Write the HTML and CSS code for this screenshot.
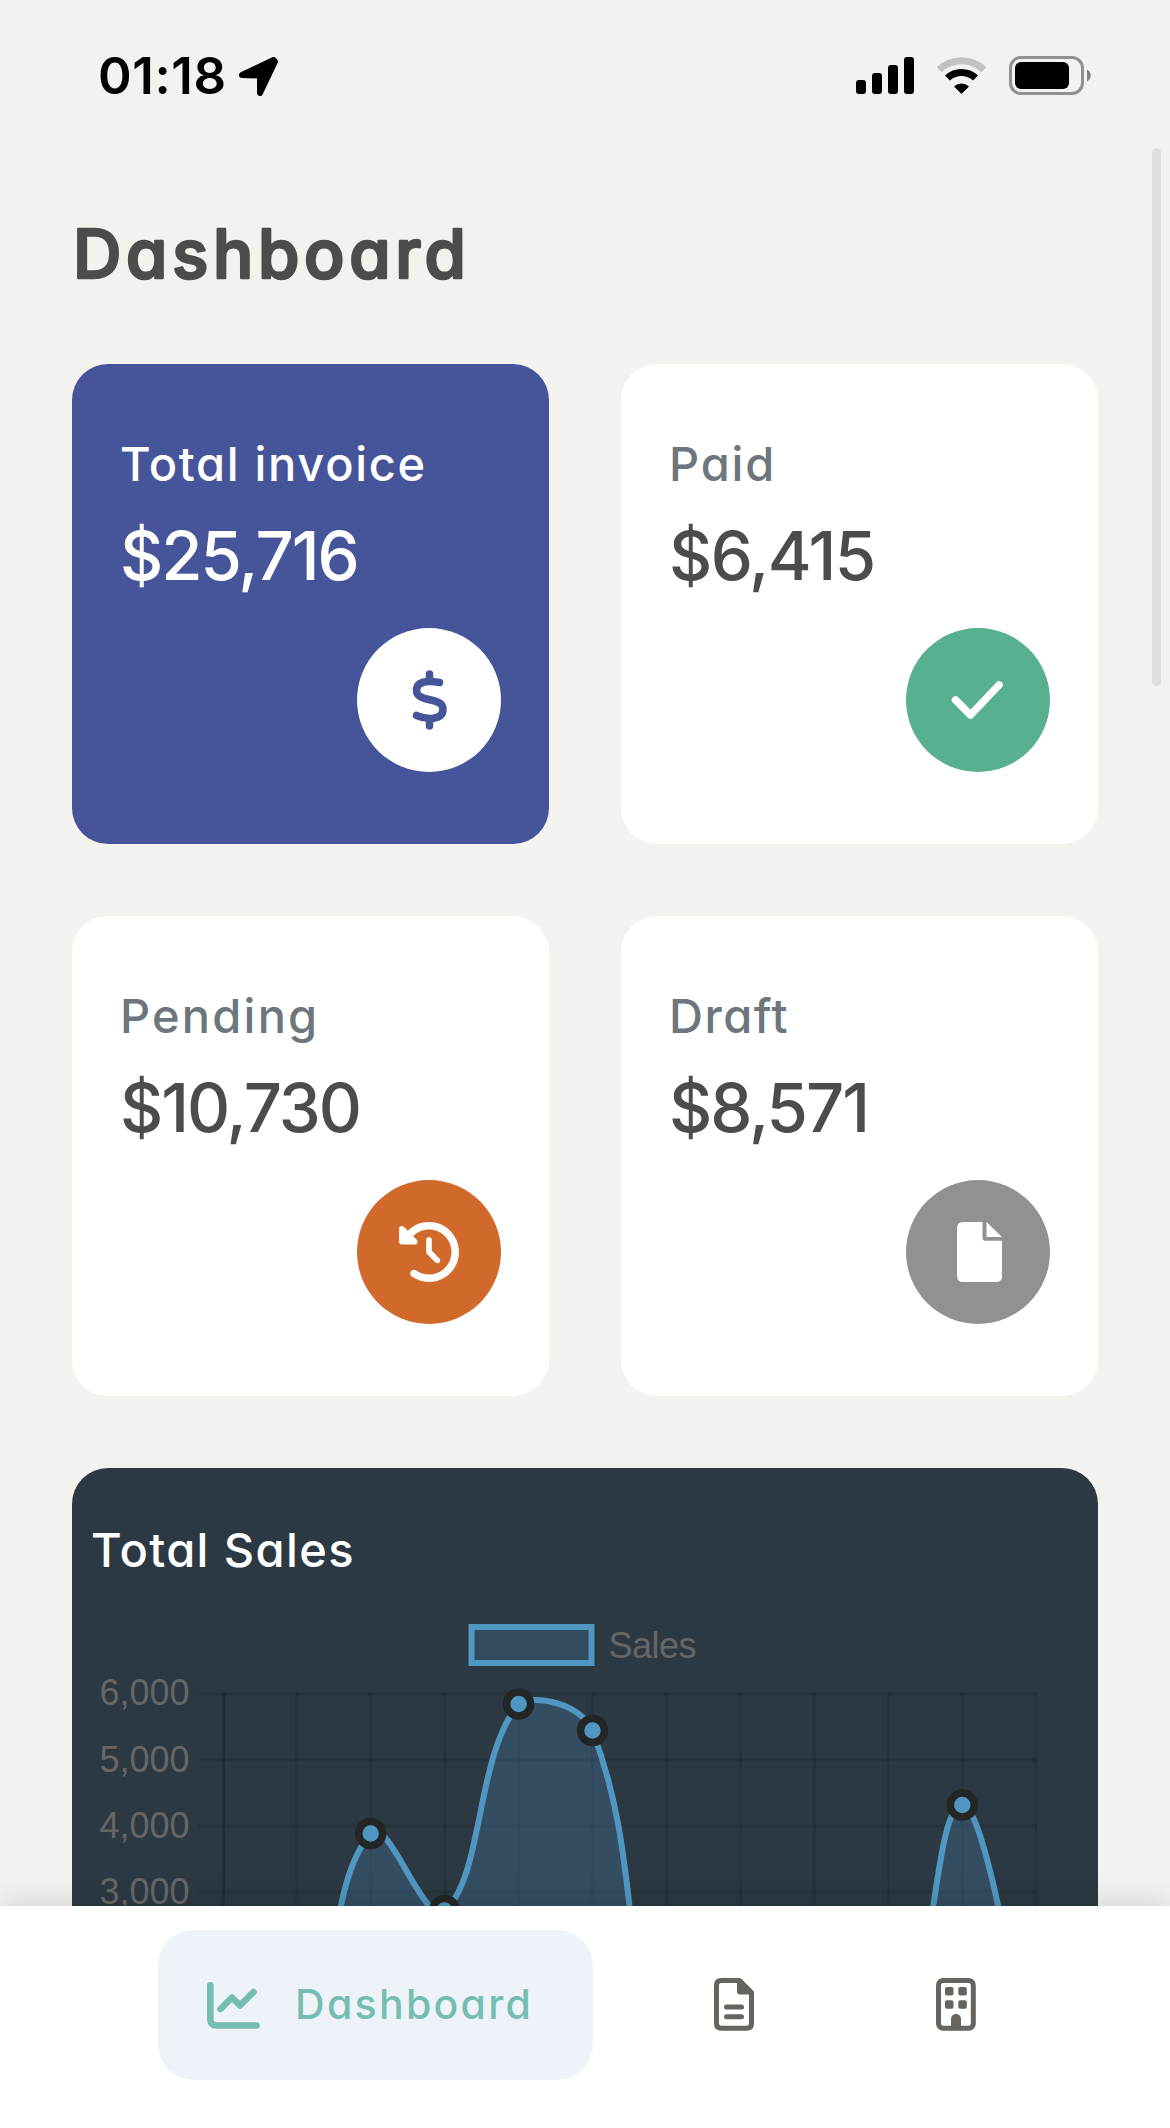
FILE: index.html
```html
<!DOCTYPE html>
<html lang="en">
<head>
<meta charset="utf-8">
<meta name="viewport" content="width=device-width, initial-scale=1">
<title>Dashboard</title>
<link rel="stylesheet" href="styles.css">
</head>
<body>
<div class="screen">
  <header class="status">
    <div class="status-left">
      <span class="clock">01:18</span>
      <svg class="location" viewBox="0 0 39 39"><path d="M3 18 34.500 3 36 4.500 21 36V18.500Z" fill="#000" stroke="#000" stroke-width="6" stroke-linejoin="round"/></svg>
    </div>
    <svg class="status-icons" viewBox="0 0 235 39">
      <rect x="0" y="24" width="10" height="14" rx="3"/>
      <rect x="16" y="17" width="10" height="21" rx="3"/>
      <rect x="32" y="9" width="10" height="29" rx="3"/>
      <rect x="48" y="1" width="10" height="37" rx="3"/>
      <g fill="none" stroke="#000">
        <path d="M83.200 13.800A32 32 0 0 1 127.800 13.800" stroke="#c3c2be" stroke-width="7"/>
        <path d="M91.500 22A20.500 20.500 0 0 1 119.500 22" stroke-width="7"/>
      </g>
      <path d="M105.500 38 98 30.500A11 11 0 0 1 113 30.500Z"/>
      <rect x="154.500" y="1.500" width="72" height="36" rx="10.500" fill="none" stroke="#91918e" stroke-width="3"/>
      <rect x="159" y="6" width="54" height="27" rx="6"/>
      <path d="M231 13.500c5 2.500 5 9.500 0 12z" fill="#82827f"/>
    </svg>
  </header>

  <main class="content">
    <h1 class="title">
      <svg class="title-art" viewBox="0 0 400 90"><text x="1" y="66" textLength="393">Dashboard</text></svg>
    </h1>

    <section class="cards">
      <article class="card card-primary">
        <p class="label label-total">Total invoice</p>
        <p class="value value-total">$25,716</p>
        <span class="badge badge-total">
          <svg viewBox="0 0 60 60"><path d="M30.500 4V11M30.500 49V56M40.500 12.500C34 11.300 17.500 9 17.500 20.500C17.500 33 44 26.500 44 39C44 50.500 28 50 17.500 45.500" fill="none" stroke="currentColor" stroke-width="7.500" stroke-linecap="round"/></svg>
        </span>
      </article>
      <article class="card">
        <p class="label label-paid">Paid</p>
        <p class="value value-paid">$6,415</p>
        <span class="badge badge-paid">
          <svg viewBox="0 0 60 60"><path d="M7.500 30 22.500 45 51 15" fill="none" stroke="currentColor" stroke-width="7.500" stroke-linecap="round" stroke-linejoin="round"/></svg>
        </span>
      </article>
      <article class="card">
        <p class="label label-pending">Pending</p>
        <p class="value value-pending">$10,730</p>
        <span class="badge badge-pending">
          <svg viewBox="0 0 512 512"><path fill="currentColor" d="M75 75L41 41C25.900 25.900 0 36.600 0 57.900V168c0 13.300 10.700 24 24 24H134.100c21.400 0 32.100-25.900 17-41l-30.800-30.800C155 85.500 203 64 256 64c106 0 192 86 192 192s-86 192-192 192c-40.800 0-78.600-12.700-109.700-34.400c-14.500-10.100-34.400-6.600-44.600 7.900s-6.600 34.400 7.900 44.600C151.200 495 201.700 512 256 512c141.400 0 256-114.600 256-256S397.400 0 256 0C185.300 0 121.300 28.700 75 75zm181 53c-13.300 0-24 10.700-24 24V256c0 6.400 2.500 12.500 7 17l72 72c9.400 9.400 24.600 9.400 33.900 0s9.400-24.600 0-33.900l-65-65V152c0-13.300-10.700-24-24-24z"/></svg>
        </span>
      </article>
      <article class="card">
        <p class="label label-draft">Draft</p>
        <p class="value value-draft">$8,571</p>
        <span class="badge badge-draft">
          <svg viewBox="0 0 60 60"><path fill="currentColor" d="M15 0H34.500V15.500Q34.500 18.800 37.500 18.800H54V54Q54 60 48 60H15Q9 60 9 54V6Q9 0 15 0ZM38.500 0 54 15H38.500Z"/></svg>
        </span>
      </article>
    </section>

    <section class="sales">
      <h2 class="sales-title">Total Sales</h2>
      <svg class="chart" viewBox="72 1600 1026 540">
        <g class="grid">
          <path d="M198.500 1693.700H1037M198.500 1759.700H1037M198.500 1825.700H1037M198.500 1891.700H1037M198.500 1957.700H1037M198.500 2023.700H1037M198.500 2089.700H1037"/>
          <path d="M223.600 1693V2090M296.800 1693V2090M370.700 1693V2090M444.500 1693V2090M518.400 1693V2090M592.400 1693V2090M666.500 1693V2090M740.400 1693V2090M814.400 1693V2090M888.400 1693V2090M962.400 1693V2090M1035.800 1693V2090"/>
          <path d="M223.600 1693V2090"/>
        </g>
        <path class="area" d="M296.700 2090C339 2010 326 1884.700 370.700 1833.500C387.500 1813 424.900 1928 444.500 1911C484.100 1876 474.900 1757 518.600 1704C534.200 1693.700 582 1703.700 592.500 1731C641.200 1858 620 1970 666.500 2090H888.500C935.800 1999 933 1805 962.500 1805C989 1805 1030 2090 1036 2090Z"/>
        <path class="line" d="M296.700 2090C339 2010 326 1884.700 370.700 1833.500C387.500 1813 424.900 1928 444.500 1911C484.100 1876 474.900 1757 518.600 1704C534.200 1693.700 582 1703.700 592.500 1731C641.200 1858 620 1970 666.500 2090H888.500C935.800 1999 933 1805 962.500 1805C989 1805 1030 2090 1036 2090"/>
        <g class="points">
          <circle cx="370.700" cy="1833.500" r="12"/>
          <circle cx="444.500" cy="1910.500" r="12"/>
          <circle cx="518.600" cy="1704" r="12"/>
          <circle cx="592.500" cy="1730.500" r="12"/>
          <circle cx="962.300" cy="1805" r="12"/>
        </g>
        <rect class="legend-box" x="471.500" y="1627" width="120" height="36"/>
        <g class="chart-text">
          <text x="608.500" y="1657.500" textLength="88">Sales</text>
          <text x="99.500" y="1705">6,000</text>
          <text x="99.500" y="1771.500">5,000</text>
          <text x="99.500" y="1837.500">4,000</text>
          <text x="99.500" y="1904">3,000</text>
        </g>
      </svg>
    </section>
  </main>

  <nav class="tabs">
    <a class="tab tab-active">
      <svg class="tab-chart" viewBox="0 0 53 47"><path d="M3.300 3.300V37Q3.300 43.500 9.800 43.500H49.500M13.500 27 25 15.500 33 23.500 46.500 10" fill="none" stroke="currentColor" stroke-width="6.600" stroke-linecap="round" stroke-linejoin="round"/></svg>
      <span class="tab-label">Dashboard</span>
    </a>
    <a class="tab-icon">
      <svg viewBox="0 0 40 53"><path d="M7 2.500H25.500L37.500 14.500V45.500Q37.500 50.300 32.700 50.300H7.300Q2.500 50.300 2.500 45.500V7.300Q2.500 2.500 7.300 2.500Z" fill="none" stroke="currentColor" stroke-width="5" stroke-linejoin="round"/><path d="M23 2V13.500Q23 16.500 26 16.500H38V14L26 2Z" fill="currentColor"/><path d="M12.500 29H27.500M12.500 38.800H27.500" stroke="currentColor" stroke-width="5" stroke-linecap="round"/></svg>
    </a>
    <a class="tab-icon tab-building">
      <svg viewBox="0 0 40 53"><rect x="2.500" y="2.500" width="34.800" height="47.800" rx="4.500" fill="none" stroke="currentColor" stroke-width="5"/><g fill="currentColor"><rect x="9" y="9" width="8.500" height="8.500" rx="1.800"/><rect x="22.300" y="9" width="8.500" height="8.500" rx="1.800"/><rect x="9" y="22.300" width="8.500" height="8.500" rx="1.800"/><rect x="22.300" y="22.300" width="8.500" height="8.500" rx="1.800"/><path d="M15 50V41A5 5 0 0 1 25 41V50Z"/></g></svg>
    </a>
  </nav>
  <div class="scrollbar"></div>
</div>
</body>
</html>
```
FILE: styles.css
```css
* { box-sizing: border-box; }

body {
  margin: 0;
  font-family: Inter, "Open Sans", sans-serif;
  font-feature-settings: "cv11" 1;
}

h1, h2, p { margin: 0; }
svg { display: block; }

.screen {
  position: relative;
  display: flex;
  flex-direction: column;
  width: 1170px;
  height: 2128px;
  overflow: hidden;
  background: #f3f2ee;
}

.status {
  display: flex;
  flex: none;
  align-items: flex-start;
  justify-content: space-between;
  height: 148px;
  padding: 56px 79px 0 98px;
}

.status-left { display: flex; gap: 14px; }
.clock {
  width: 127px;
  height: 39px;
  font-size: 51px;
  font-weight: 600;
  line-height: 39px;
  letter-spacing: 0.6px;
  white-space: nowrap;
}
.location { width: 39px; height: 39px; margin-top: 1px; }
.status-icons { width: 235px; height: 39px; }

.content {
  display: flex;
  flex: 1;
  flex-direction: column;
  min-height: 0;
  padding: 64px 72px 0;
  overflow: hidden;
}

.title { flex: none; height: 152px; }
.title-art { width: 400px; height: 90px; }
.title-art text {
  font-size: 67px;
  font-weight: 500;
  fill: #4c4c4c;
  stroke: #4c4c4c;
  stroke-width: 2.6px;
  stroke-linejoin: round;
}

.cards {
  display: grid;
  flex: none;
  grid-template-columns: 477px 477px;
  grid-auto-rows: 480px;
  gap: 72px;
}

.card {
  display: flex;
  flex-direction: column;
  padding: 71px 48px 72px;
  border-radius: 36px;
  background: #fff;
  color: #4c4c4c;
}
.card-primary { background: #465499; color: #fff; }

.label {
  height: 57px;
  color: #6d757d;
  font-size: 47px;
  font-weight: 500;
  line-height: 57px;
  white-space: nowrap;
}
.card-primary .label { color: #fff; }
.label-total { letter-spacing: 1.7px; }
.label-paid { letter-spacing: 1.8px; }
.label-pending { letter-spacing: 2.2px; }
.label-draft { letter-spacing: 1.5px; }

.value {
  height: 90px;
  margin-top: 19px;
  font-size: 67px;
  font-weight: 500;
  line-height: 90px;
  letter-spacing: -2px;
  white-space: nowrap;
}
.value-paid { letter-spacing: -1.6px; }

.badge {
  display: grid;
  place-items: center;
  align-self: flex-end;
  width: 144px;
  height: 144px;
  margin-top: auto;
  border-radius: 50%;
  color: #fff;
}
.badge svg { width: 60px; height: 60px; }
.badge-total { background: #fff; color: #465499; }
.badge-paid { background: #57b08e; }
.badge-pending { background: #d06929; }
.badge-draft { background: #919191; }

.sales {
  display: flex;
  flex: none;
  flex-direction: column;
  height: 700px;
  margin-top: 72px;
  border-radius: 36px;
  background: #2c3942;
}
.sales-title {
  height: 132px;
  padding: 53px 19px 0;
  color: #fff;
  font-size: 47px;
  font-weight: 500;
  line-height: 57px;
  letter-spacing: 1.4px;
}
.chart { width: 1026px; height: 540px; }
.grid { fill: none; stroke: rgba(0, 0, 0, 0.1); stroke-width: 3px; }
.area { fill: rgba(75, 130, 180, 0.28); }
.line { fill: none; stroke: #4f97c2; stroke-width: 6px; }
.points { fill: #4f97c2; stroke: #242525; stroke-width: 7.5px; }
.legend-box { fill: #344c5f; stroke: #4f97c2; stroke-width: 6px; }
.chart-text {
  fill: #666;
  font-family: "Liberation Sans", Arial, sans-serif;
  font-size: 36px;
}

.tabs {
  position: relative;
  display: flex;
  flex: none;
  align-items: flex-start;
  height: 222px;
  padding: 24px 158px 0;
  background: #fff;
  box-shadow: 0 0 28px rgba(0, 0, 0, 0.16);
}
.tab {
  display: flex;
  align-items: center;
  width: 435px;
  height: 150px;
  padding-left: 49px;
  border-radius: 36px;
  background: #eef3fa;
  color: #74bdb1;
}
.tab-chart { width: 53px; height: 47px; }
.tab-label {
  margin: -2px 0 0 35px;
  font-size: 41px;
  font-weight: 500;
  letter-spacing: 2.3px;
  white-space: nowrap;
}
.tab-icon { margin: 48px 0 0 121px; color: #67645f; }
.tab-icon svg { width: 40px; height: 53px; }
.tab-building { margin-left: 182px; }

.scrollbar {
  position: absolute;
  top: 148px;
  right: 9px;
  width: 9px;
  height: 538px;
  border-radius: 5px;
  background: #dededb;
}
```
